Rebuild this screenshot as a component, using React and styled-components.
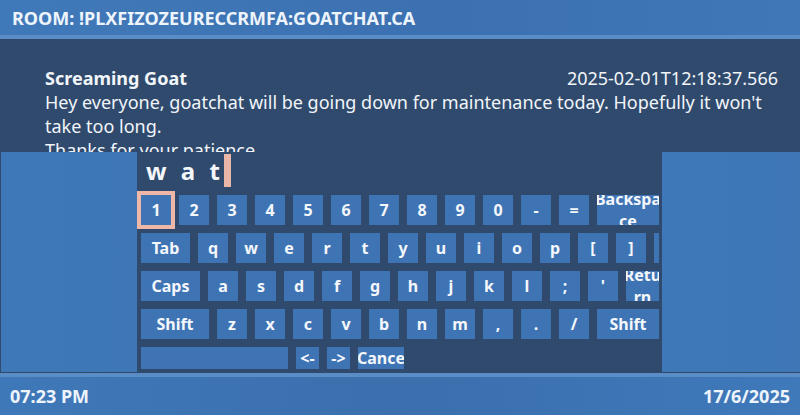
import React from "react";
import styled, { createGlobalStyle } from "styled-components";

const Global = createGlobalStyle`
  html, body { margin: 0; padding: 0; }
  body { width: 800px; height: 415px; overflow: hidden; background: #2f4a6d; font-family: "Noto Sans", "Open Sans", sans-serif; color: #f2f5f9; }
  * { box-sizing: border-box; }
`;

const Screen = styled.div`
  width: 800px;
  height: 415px;
  display: flex;
  flex-direction: column;
`;

const Header = styled.header`
  height: 39px;
  flex: none;
  padding: 3px 12px 0;
  border-bottom: 4px solid #5a8dc6;
  background: linear-gradient(90deg, #4079b9 0%, #3c71b1 55%, #3f77b7 100%);
  font-weight: 700;
  font-size: 18px;
  line-height: 31px;
  color: #eef4fb;
  white-space: nowrap;
`;

const Main = styled.main`
  position: relative;
  flex: 1;
  background: #2f4a6d;
  overflow: hidden;
`;

const Message = styled.article`
  padding: 27px 22px 0 45px;
  font-size: 18px;
  line-height: 24px;
`;

const MessageHead = styled.div`
  display: flex;
  justify-content: space-between;
`;

const Sender = styled.span`
  font-weight: 700;
`;

const Body = styled.p`
  margin: 0;
`;

const Overlay = styled.div`
  position: absolute;
  left: 0;
  right: 0;
  bottom: 0;
  height: 221px;
  display: flex;
  padding: 0 0 1px 1px;
  background: #2f4a6d;
`;

const SidePanel = styled.div`
  width: ${(p) => p.$w}px;
  flex: ${(p) => (p.$w ? "none" : "1")};
  background: linear-gradient(90deg, #3f78b8, #3e76b6);
`;

const Keyboard = styled.div`
  width: 525px;
  flex: none;
  display: flex;
  flex-direction: column;
  gap: 8px;
  padding: 2px 3px 0 4px;
`;

const InputLine = styled.div`
  height: 33px;
  display: flex;
  align-items: center;
  padding-left: 5px;
  font-weight: 700;
  font-size: 24px;
  line-height: 33px;
  letter-spacing: 4px;
  color: #f4f7fb;
  white-space: pre;
`;

const Cursor = styled.span`
  display: inline-block;
  width: 7px;
  height: 33px;
  background: #eab6a8;
`;

const KeyRow = styled.div`
  display: flex;
  gap: 8px;
  width: 518px;
  height: ${(p) => p.$h}px;
  overflow: ${(p) => (p.$clip ? "hidden" : "visible")};
`;

const Key = styled.div`
  flex: none;
  width: ${(p) => p.$w}px;
  height: ${(p) => p.$h}px;
  background: #3f74b4;
  color: #f4f7fb;
  font-weight: 700;
  font-size: 16px;
  line-height: 22px;
  text-align: center;
  word-break: break-all;
  overflow: hidden;
  display: flex;
  align-items: ${(p) => (p.$h > 25 ? "center" : "flex-start")};
  justify-content: center;
  outline: ${(p) => (p.$focus ? "4px solid #efb7a8" : "none")};
`;

const KeyLabel = styled.span`
  display: block;
  flex: none;
  width: calc(100% + 5px);
`;

const Footer = styled.footer`
  height: 42px;
  flex: none;
  border-top: 4px solid #5a8dc6;
  background: linear-gradient(90deg, #3f78b8 0%, #3b6fae 50%, #3f79ba 100%);
  display: flex;
  align-items: center;
  justify-content: space-between;
  padding: 0 10px;
  font-weight: 700;
  font-size: 18px;
  color: #eef4fb;
`;

const rows = [
  {
    h: 30,
    keys: [
      ["1", 30, true], ["2", 30], ["3", 30], ["4", 30], ["5", 30], ["6", 30],
      ["7", 30], ["8", 30], ["9", 30], ["0", 30], ["-", 30], ["=", 30], ["Backspace", 62],
    ],
  },
  {
    h: 30,
    clip: true,
    keys: [
      ["Tab", 49], ["q", 30], ["w", 30], ["e", 30], ["r", 30], ["t", 30], ["y", 30],
      ["u", 30], ["i", 30], ["o", 30], ["p", 30], ["[", 30], ["]", 30], ["\\", 30],
    ],
  },
  {
    h: 30,
    clip: true,
    keys: [
      ["Caps", 59], ["a", 30], ["s", 30], ["d", 30], ["f", 30], ["g", 30], ["h", 30],
      ["j", 30], ["k", 30], ["l", 30], [";", 30], ["'", 30], ["Return", 33],
    ],
  },
  {
    h: 30,
    clip: true,
    keys: [
      ["Shift", 68], ["z", 30], ["x", 30], ["c", 30], ["v", 30], ["b", 30], ["n", 30],
      ["m", 30], [",", 30], [".", 30], ["/", 30], ["Shift", 62],
    ],
  },
  {
    h: 22,
    clip: true,
    keys: [["", 147], ["<-", 23], ["->", 23], ["Cancel", 46]],
  },
];

export default function App() {
  return (
    <>
      <Global />
      <Screen>
        <Header>ROOM: !PLXFIZOZEURECCRMFA:GOATCHAT.CA</Header>
        <Main>
          <Message>
            <MessageHead>
              <Sender>Screaming Goat</Sender>
              <span>2025-02-01T12:18:37.566</span>
            </MessageHead>
            <Body>
              Hey everyone, goatchat will be going down for maintenance today. Hopefully it won't
              take too long.
            </Body>
            <Body>Thanks for your patience.</Body>
          </Message>
          <Overlay>
            <SidePanel $w={136} />
            <Keyboard>
              <InputLine>
                w a t<Cursor />
              </InputLine>
              {rows.map((row, i) => (
                <KeyRow key={i} $h={row.h} $clip={row.clip}>
                  {row.keys.map(([label, w, focus], j) => (
                    <Key key={j} $w={w} $h={row.h} $focus={focus}>
                      <KeyLabel>{label}</KeyLabel>
                    </Key>
                  ))}
                </KeyRow>
              ))}
            </Keyboard>
            <SidePanel />
          </Overlay>
        </Main>
        <Footer>
          <span>07:23 PM</span>
          <span>17/6/2025</span>
        </Footer>
      </Screen>
    </>
  );
}
